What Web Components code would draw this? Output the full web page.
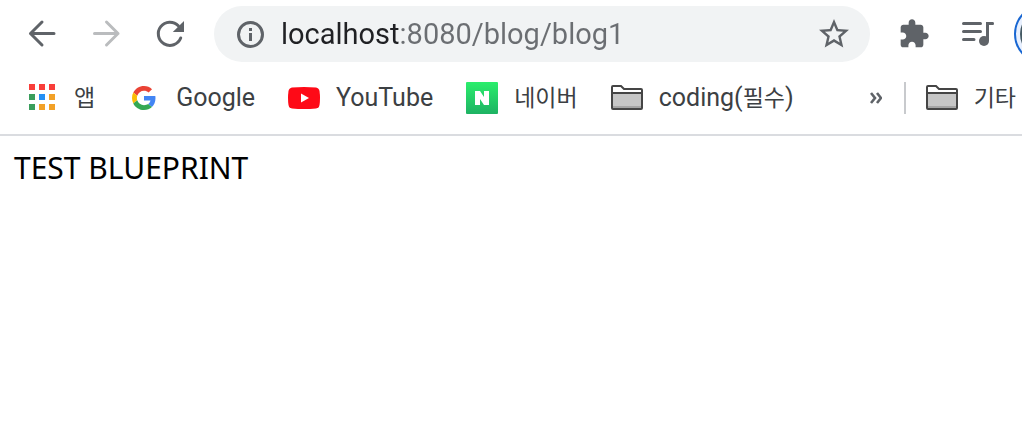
<!DOCTYPE html>
<html lang="ko">
<head>
<meta charset="utf-8">
<title>localhost:8080/blog/blog1</title>
<style>
  body {
    margin: 0;
    background: #fff;
    font-family: Roboto, "Noto Sans CJK KR", sans-serif;
  }
</style>
</head>
<body>
<browser-window>
  <browser-toolbar slot="toolbar" host="localhost" path=":8080/blog/blog1"></browser-toolbar>
  <bookmarks-bar slot="bookmarks">
    <bookmark-item icon="apps"><small>앱</small></bookmark-item>
    <bookmark-item icon="google">Google</bookmark-item>
    <bookmark-item icon="youtube">YouTube</bookmark-item>
    <bookmark-item icon="naver"><small>네이버</small></bookmark-item>
    <bookmark-item icon="folder">coding(<small>필수</small>)</bookmark-item>
    <bookmark-item slot="other" icon="folder"><small>기타</small></bookmark-item>
  </bookmarks-bar>
  <page-content>TEST BLUEPRINT</page-content>
</browser-window>

<script>
  // every icon is drawn on its own viewBox
  const ICONS = {
    back: ['0 0 32 32', `<path d="M28 15.5H4.5M16 4 4.5 15.5 16 27" fill="none" stroke="currentColor" stroke-width="3" stroke-linecap="round" stroke-linejoin="round"/>`],
    forward: ['0 0 32 32', `<path d="M4.5 15.5H28M16.5 4 28 15.5 16.5 27" fill="none" stroke="currentColor" stroke-width="3" stroke-linecap="round" stroke-linejoin="round"/>`],
    reload: ['0 0 32 32', `<path d="M26.7 20A11.6 11.6 0 1 1 24.3 7.8" fill="none" stroke="currentColor" stroke-width="3" stroke-linecap="round"/><path d="M30 3V14H18.8z"/>`],
    info: ['0 0 32 32', `<circle cx="16.5" cy="16.5" r="12" fill="none" stroke="currentColor" stroke-width="3"/><path d="M15 10h3v3h-3zM15 15h3v8h-3z"/>`],
    star: ['0 0 24 24', `<path d="M22 9.24l-7.19-.62L12 2 9.19 8.63 2 9.24l5.46 4.73L5.82 21 12 17.27 18.18 21l-1.63-7.03L22 9.24zM12 15.4l-3.76 2.27 1-4.28-3.32-2.88 4.38-.38L12 6.1l1.71 4.04 4.38.38-3.32 2.88 1 4.28L12 15.4z"/>`],
    puzzle: ['0 0 24 24', `<path d="M20.5 11H19V7c0-1.1-.9-2-2-2h-4V3.5C13 2.12 11.88 1 10.5 1S8 2.12 8 3.5V5H4c-1.1 0-1.99.9-1.99 2v3.8H3.5c1.49 0 2.7 1.21 2.7 2.7s-1.21 2.7-2.7 2.7H2V20c0 1.1.9 2 2 2h3.8v-1.5c0-1.49 1.21-2.7 2.7-2.7 1.49 0 2.7 1.21 2.7 2.7V22H17c1.1 0 2-.9 2-2v-4h1.5c1.38 0 2.5-1.12 2.5-2.5S21.88 11 20.5 11z"/>`],
    media: ['0 0 32 32', `<path d="M1.5 5.5H18.5M1.5 13.5H18.5M1.5 21.5H12" fill="none" stroke="currentColor" stroke-width="3" stroke-linecap="round"/><circle cx="22" cy="23" r="5"/><path d="M24 4h7q1 0 1 1.5T31 7h-4v16h-3z"/>`],
    apps: ['0 0 32 32', `<path fill="#f93e3a" d="M3 2h6v6H3zM13 2h6v6h-6zM23 2h6v6h-6z"/><path fill="#3a9e5c" d="M3 12h6v6H3zM3 22h6v6H3z"/><path fill="#2490f5" d="M13 12h6v6h-6z"/><path fill="#f2a127" d="M23 12h6v6h-6zM13 22h6v6h-6zM23 22h6v6h-6z"/>`],
    google: ['-8 -8 64 64', `<path fill="#ea4335" d="M24 9.5c3.54 0 6.71 1.22 9.21 3.6l6.85-6.85C35.9 2.38 30.47 0 24 0 14.62 0 6.51 5.38 2.56 13.22l7.98 6.19C12.43 13.72 17.74 9.5 24 9.5z"/><path fill="#4285f4" d="M46.98 24.55c0-1.57-.15-3.09-.38-4.55H24v9.02h12.94c-.58 2.96-2.26 5.48-4.78 7.18l7.73 6c4.51-4.18 7.09-10.36 7.09-17.65z"/><path fill="#fbbc05" d="M10.53 28.59c-.48-1.45-.76-2.99-.76-4.59s.27-3.14.76-4.59l-7.98-6.19C.92 16.46 0 20.12 0 24c0 3.88.92 7.54 2.56 10.78l7.97-6.19z"/><path fill="#34a853" d="M24 48c6.48 0 11.93-2.13 15.89-5.81l-7.73-6c-2.15 1.45-4.92 2.3-8.16 2.3-6.26 0-11.57-4.22-13.47-9.91l-7.98 6.19C6.51 42.62 14.62 48 24 48z"/>`],
    youtube: ['0 0 32 32', `<path fill="#fe0a17" d="M4 5.5Q16 4.5 28 5.5 31 6 31.5 9 32.5 16 31.5 23 31 26 28 26.5 16 27.5 4 26.5 1 26 .5 23-.5 16 .5 9 1 6 4 5.5z"/><path fill="#fff" d="M13 11.5v9l8-4.5z"/>`],
    naver: ['0 0 32 32', `<defs><linearGradient id="g" x2="0" y2="1"><stop stop-color="#2bee6c"/><stop offset="1" stop-color="#1eb263"/></linearGradient></defs><rect width="32" height="32" rx="1" fill="url(#g)"/><path fill="#fff" d="M9 9h5l4 6V9h5v14h-5l-4-6v6H9z"/>`],
    folder: ['0 0 32 32', `<path fill="#fff" d="M1 11V5q0-1 1-1h8l3 3h17q1 0 1 1v3z"/><path fill="#c6c6c6" d="M1 11h30v16H1z"/><path fill="#a5a5a5" d="M2 24h28v3H2z"/><path fill="none" stroke="#454545" stroke-width="2" d="M1 11V5q0-1 1-1h8l3 3h17q1 0 1 1v18q0 1-1 1H2q-1 0-1-1V11H31"/>`],
    more: ['0 0 12 12', `<path d="M1 1l4 5-4 5M7 1l4 5-4 5" fill="none" stroke="currentColor" stroke-width="2.6"/>`]
  };

  class UiIcon extends HTMLElement {
    constructor() {
      super();
      this.attachShadow({ mode: 'open' });
    }

    connectedCallback() {
      const [box, shape] = ICONS[this.getAttribute('name')];
      this.shadowRoot.innerHTML = `
        <style>
          :host { display: block; flex: none; width: var(--icon-size, 32px); height: var(--icon-size, 32px); }
          svg { display: block; width: 100%; height: 100%; }
        </style>
        <svg viewBox="${box}" fill="currentColor" aria-hidden="true">${shape}</svg>
      `;
    }
  }

  class BrowserWindow extends HTMLElement {
    constructor() {
      super();
      this.attachShadow({ mode: 'open' }).innerHTML = `
        <style>
          :host { display: block; overflow: hidden; }
          header { border-bottom: 2px solid #dadce0; }
        </style>
        <header>
          <slot name="toolbar"></slot>
          <slot name="bookmarks"></slot>
        </header>
        <slot></slot>
      `;
    }
  }

  class BrowserToolbar extends HTMLElement {
    constructor() {
      super();
      this.attachShadow({ mode: 'open' });
    }

    connectedCallback() {
      this.shadowRoot.innerHTML = `
        <style>
          :host { display: flex; align-items: center; gap: 28px; padding: 6px 0 6px 26px; color: #5f6368; }
          nav, .actions { display: flex; align-items: center; gap: 32px; }
          button { display: block; flex: none; margin: 0; padding: 0; border: 0; background: none; color: inherit; }
          button:disabled { color: #babcbe; }
          .profile { width: 8px; margin-left: -12px; overflow: hidden; }
          .avatar { display: block; box-sizing: border-box; width: 60px; height: 60px; margin: -2px 0; border: 2px solid #1967d2; border-radius: 50%; padding: 4px; background: #e8f0fe; }
          .avatar span { display: block; height: 100%; border-radius: 50%; background: #455a64; }
        </style>
        <nav>
          <button aria-label="Back"><ui-icon name="back"></ui-icon></button>
          <button aria-label="Forward" disabled><ui-icon name="forward"></ui-icon></button>
          <button aria-label="Reload"><ui-icon name="reload"></ui-icon></button>
        </nav>
        <address-bar host="${this.getAttribute('host')}" path="${this.getAttribute('path')}"></address-bar>
        <div class="actions">
          <button aria-label="Extensions"><ui-icon name="puzzle"></ui-icon></button>
          <button aria-label="Media"><ui-icon name="media"></ui-icon></button>
          <button class="profile" aria-label="Profile"><span class="avatar"><span></span></span></button>
        </div>
      `;
    }
  }

  class AddressBar extends HTMLElement {
    constructor() {
      super();
      this.attachShadow({ mode: 'open' });
    }

    connectedCallback() {
      const host = this.getAttribute('host');
      const path = this.getAttribute('path');
      this.shadowRoot.innerHTML = `
        <style>
          :host { display: flex; flex: 1; min-width: 0; align-items: center; box-sizing: border-box; height: 56px; padding: 0 18px 0 20px; border-radius: 28px; background: #f1f3f4; color: #5f6368; }
          button { display: block; flex: none; margin: 0; padding: 0; border: 0; background: none; color: inherit; }
          .star { --icon-size: 36px; }
          input {
            flex: 1; min-width: 0; height: 40px; margin: 0 15px; padding: 0; border: 0; outline: 0;
            font: 29px/40px Roboto, sans-serif;
            color: transparent; caret-color: #202124;
            background: linear-gradient(to right, #202124 var(--host-width), #6b6e72 var(--host-width));
            -webkit-background-clip: text; background-clip: text;
          }
        </style>
        <button aria-label="Site information"><ui-icon name="info"></ui-icon></button>
        <input type="text" aria-label="Address" spellcheck="false" value="${host}${path}">
        <button class="star" aria-label="Bookmark this page"><ui-icon name="star"></ui-icon></button>
      `;
      // the host part is darker than the rest of the address
      const pen = document.createElement('canvas').getContext('2d');
      pen.font = '29px Roboto, sans-serif';
      this.style.setProperty('--host-width', Math.round(pen.measureText(host).width) + 'px');
    }
  }

  class BookmarksBar extends HTMLElement {
    constructor() {
      super();
      this.attachShadow({ mode: 'open' }).innerHTML = `
        <style>
          :host { display: flex; align-items: center; box-sizing: border-box; height: 66px; padding: 6px 6px 12px 26px; }
          .items { display: flex; gap: 33px; }
          .right { display: flex; align-items: center; margin-left: auto; color: #5f6368; }
          button { display: block; margin: 0 22px 0 0; padding: 0; border: 0; background: none; color: inherit; --icon-size: 12px; }
          .line { width: 2px; height: 32px; margin-right: 20px; background: #c8cacd; }
        </style>
        <div class="items"><slot></slot></div>
        <div class="right">
          <button aria-label="More bookmarks"><ui-icon name="more"></ui-icon></button>
          <div class="line"></div>
          <slot name="other"></slot>
        </div>
      `;
    }
  }

  class BookmarkItem extends HTMLElement {
    constructor() {
      super();
      this.attachShadow({ mode: 'open' });
    }

    connectedCallback() {
      this.shadowRoot.innerHTML = `
        <style>
          :host { display: block; }
          a { display: flex; align-items: center; gap: 16px; height: 32px; color: #3c4043; font-size: 25px; line-height: 32px; white-space: nowrap; text-decoration: none; }
          /* hangul is set a little smaller than latin */
          ::slotted(small) { font-size: 23px; }
        </style>
        <a href="#"><ui-icon name="${this.getAttribute('icon')}"></ui-icon><span><slot></slot></span></a>
      `;
    }
  }

  class PageContent extends HTMLElement {
    constructor() {
      super();
      this.attachShadow({ mode: 'open' }).innerHTML = `
        <style>
          :host { display: block; padding: 12px 14px; color: #000; font: 30px/40px "Noto Sans", sans-serif; }
        </style>
        <slot></slot>
      `;
    }
  }

  customElements.define('ui-icon', UiIcon);
  customElements.define('address-bar', AddressBar);
  customElements.define('browser-toolbar', BrowserToolbar);
  customElements.define('bookmark-item', BookmarkItem);
  customElements.define('bookmarks-bar', BookmarksBar);
  customElements.define('page-content', PageContent);
  customElements.define('browser-window', BrowserWindow);
</script>
</body>
</html>
